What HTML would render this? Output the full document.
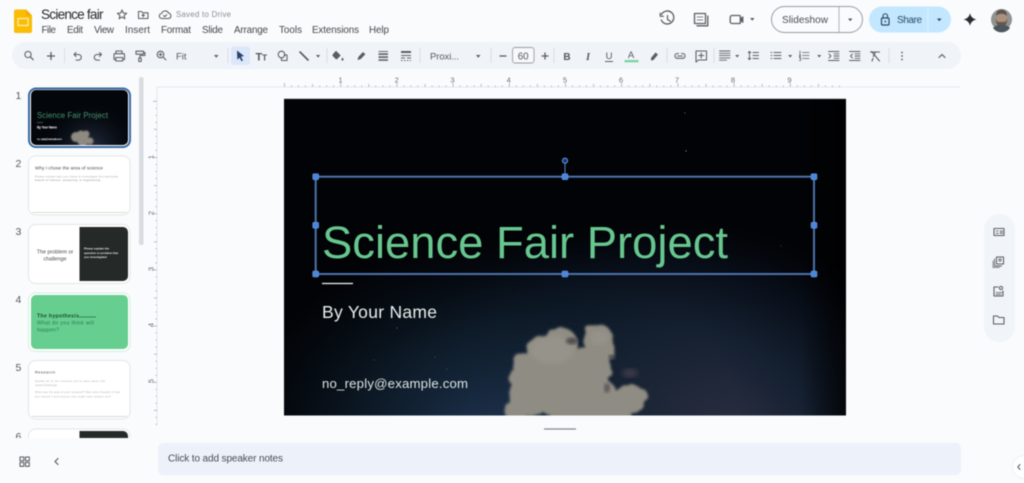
<!DOCTYPE html>
<html lang="en">
<head>
<meta charset="utf-8">
<title>Science fair</title>
<style>
html,body{margin:0;padding:0;width:1024px;height:483px;overflow:hidden;background:#f9fbfd}
svg{display:block;position:absolute;left:0;top:0;filter:blur(.4px)}
text{font-family:"Liberation Sans",sans-serif}
.i{fill:none;stroke:#5b5e60;stroke-width:1.05;stroke-linecap:round;stroke-linejoin:round}
.m{font-size:9.8px;fill:#45484a}
.a{fill:#5b5e60}
.sep{stroke:#dce0e5;stroke-width:1}
.n{font-size:10.5px;fill:#55585a}
.r{font-size:7.5px;fill:#6b6f73;text-anchor:middle}
</style>
</head>
<body>
<svg width="1024" height="483" viewBox="0 0 1024 483" xmlns="http://www.w3.org/2000/svg">
<defs>
<pattern id="th" x="284" y="0" width="56.2" height="10" patternUnits="userSpaceOnUse">
<path d="M.5 83V87M7.5 85.500V87M14.500 85.500V87M21.500 85.500V87M28.600 84V87M35.600 85.500V87M42.600 85.500V87M49.600 85.500V87" transform="translate(0,-80)" stroke="#a0a4a8" stroke-width=".7" fill="none"/>
</pattern>
<pattern id="tv" x="0" y="100.8" width="10" height="56.2" patternUnits="userSpaceOnUse">
<path d="M3 .5H7M5.500 7.500H7M5.500 14.500H7M5.500 21.500H7M4 28.600H7M5.500 35.600H7M5.500 42.600H7M5.500 49.600H7" stroke="#a0a4a8" stroke-width=".7" fill="none"/>
</pattern>
<radialGradient id="g1" gradientUnits="userSpaceOnUse" cx="660" cy="470" r="360" gradientTransform="translate(660 470) scale(.85 .72) translate(-660 -470)">
<stop offset="0" stop-color="#363b4d"/><stop offset=".28" stop-color="#2a2f41"/><stop offset=".55" stop-color="#152031"/><stop offset=".8" stop-color="#080e18"/><stop offset="1" stop-color="#03060b" stop-opacity="0"/>
</radialGradient>
<radialGradient id="g2" gradientUnits="userSpaceOnUse" cx="490" cy="440" r="240" gradientTransform="translate(490 440) scale(1.05 .85) translate(-490 -440)">
<stop offset="0" stop-color="#1e3450" stop-opacity=".95"/><stop offset=".55" stop-color="#10202f" stop-opacity=".7"/><stop offset="1" stop-color="#0a1522" stop-opacity="0"/>
</radialGradient>
<linearGradient id="g4" x1="0" x2="1" y1="0" y2="0">
<stop offset="0" stop-color="#000" stop-opacity="0"/><stop offset="1" stop-color="#000" stop-opacity=".7"/>
</linearGradient>
<radialGradient id="g3" gradientUnits="userSpaceOnUse" cx="90" cy="150" r="48">
<stop offset="0" stop-color="#2a3346"/><stop offset="1" stop-color="#0a0f18" stop-opacity="0"/>
</radialGradient>
<linearGradient id="cl" x1="0" x2="0" y1="0" y2="1">
<stop offset="0" stop-color="#9a968b"/><stop offset="1" stop-color="#88857c"/>
</linearGradient>
<filter id="cloud" x="-10%" y="-10%" width="120%" height="120%">
<feTurbulence type="fractalNoise" baseFrequency=".09" numOctaves="2" seed="4" result="n"/>
<feDisplacementMap in="SourceGraphic" in2="n" scale="6" result="d"/>
<feGaussianBlur in="d" stdDeviation="1.300"/>
</filter>
<filter id="b2"><feGaussianBlur stdDeviation="1.500"/></filter>
<filter id="b3"><feGaussianBlur stdDeviation="2.800"/></filter>
<filter id="b1"><feGaussianBlur stdDeviation=".8"/></filter>
<clipPath id="slide"><rect x="284" y="99" width="562" height="316.500"/></clipPath>
<clipPath id="tc"><rect x="0" y="80" width="136" height="358"/></clipPath>
<clipPath id="th1"><rect x="31" y="90" width="97" height="55" rx="5"/></clipPath>
</defs>

<rect width="1024" height="483" fill="#f9fbfd"/>

<!-- logo -->
<path d="M16 9.500H26L32 15.500V31a2 2 0 0 1-2 2H16a2 2 0 0 1-2-2V11.500a2 2 0 0 1 2-2Z" fill="#fbbc04"/>
<path d="M26 9.500L32 15.500H27.500a1.500 1.500 0 0 1-1.500-1.500Z" fill="#f5a800"/>
<rect x="18" y="18.500" width="10" height="7" fill="none" stroke="#fdeeb8" stroke-width="1.200"/>

<!-- title row -->
<text x="41" y="19" font-size="13.600" fill="#2a2a2a" textLength="62.500">Science fair</text>
<path class="i" d="M122 10l1.300 3 3.300.3-2.500 2.200.8 3.200-2.900-1.700-2.900 1.700.8-3.200-2.500-2.200 3.300-.3Z"/>
<path class="i" d="M138.500 11.500h3l1.200 1.300h5.300v5.700h-9.500Z"/>
<path class="i" d="M143.200 17v-2.500M142 15.500l1.200-1.200 1.200 1.200" stroke-width=".8"/>
<path class="i" d="M162 18.500a2.500 2.500 0 0 1-.4-5 3.800 3.800 0 0 1 7-.4 2.800 2.800 0 0 1 .4 5.400Z"/>
<path class="i" d="M163.500 15.500l1.200 1.200 2-2" stroke-width=".8"/>
<text x="176" y="17" font-size="7.800" fill="#8a8e92" textLength="55">Saved to Drive</text>

<!-- menu -->
<text class="m" x="41.500" y="33" textLength="14.500">File</text>
<text class="m" x="67" y="33" textLength="16">Edit</text>
<text class="m" x="94" y="33" textLength="20">View</text>
<text class="m" x="125" y="33" textLength="25">Insert</text>
<text class="m" x="161" y="33" textLength="30">Format</text>
<text class="m" x="202" y="33" textLength="21">Slide</text>
<text class="m" x="234" y="33" textLength="34">Arrange</text>
<text class="m" x="279" y="33" textLength="23">Tools</text>
<text class="m" x="312" y="33" textLength="47">Extensions</text>
<text class="m" x="369" y="33" textLength="20">Help</text>

<!-- top right -->
<g class="i">
<path d="M661.500 14.500a6.500 6.500 0 1 1-.2 5.500" stroke-width="1.300"/>
<path d="M660.200 13v3.300h3.300" stroke-width="1.100"/>
<path d="M667.500 15.500v4l2.800 1.700" stroke-width="1.200"/>
<path d="M694.500 13.500h11v10h-11Z" stroke-width="1.300"/>
<path d="M697 25.800H707.800V16" stroke-width="1.300"/>
<path d="M697 17h6M697 20h6" stroke-width=".7"/>
<path d="M732 15.500h7.500a.8.800 0 0 1 .8.800v7.200H732a1.800 1.800 0 0 1-1.800-1.800v-4.400A1.800 1.800 0 0 1 732 15.500Z" stroke-width="1.300"/>
<path d="M740.500 18.500l2.500-1.800v5.800l-2.500-1.800Z" fill="#5b5e60" stroke-width=".8"/>
</g>
<path class="a" d="M750 18h4.500l-2.250 2.800Z"/>
<rect x="771.500" y="6.500" width="91" height="26" rx="13" fill="#f9fbfd" stroke="#9a9ea2" stroke-width="1"/>
<path d="M839 7V32" stroke="#b0b4b8" stroke-width="1"/>
<text x="782" y="23" font-size="10" fill="#4a4d50" textLength="46">Slideshow</text>
<path class="a" d="M848 18.500h4.500l-2.250 2.700Z"/>
<rect x="869" y="6.500" width="82" height="26" rx="13" fill="#c2e7ff"/>
<path d="M928 7V32" stroke="#dff1fe" stroke-width="1"/>
<rect x="881.500" y="18" width="7.500" height="7" rx="1" fill="none" stroke="#2b4a66" stroke-width="1.200"/>
<path d="M883 18v-2a2.250 2.250 0 0 1 4.500 0v2" fill="none" stroke="#2b4a66" stroke-width="1.100"/>
<circle cx="885.250" cy="21.500" r=".9" fill="#2b4a66"/>
<text x="897" y="23" font-size="10" fill="#2b4a66" textLength="25">Share</text>
<path d="M937 18.500h4.500l-2.250 2.700Z" fill="#2b4a66"/>
<path d="M970 13C970.800 16.800 972.500 18.500 976.500 19.500 972.500 20.500 970.800 22.200 970 26 969.200 22.200 967.500 20.500 963.500 19.500 967.500 18.500 969.200 16.800 970 13Z" fill="#2a2c30"/>
<circle cx="1001.500" cy="19.500" r="10.500" fill="#8e938f"/>
<ellipse cx="1001.500" cy="18" rx="5.500" ry="6.500" fill="#ac8f7c"/>
<path d="M996 18.500c1 4 2 3.500 5.500 3.500s4.500 .5 5.500-3.500c.5 6-2 8-5.500 8s-6-2-5.500-8Z" fill="#66574d"/>
<path d="M996 16c0-5 3-6.500 5.500-6.500s5.500 1.500 5.500 6.500c-2-3-9-3-11 0Z" fill="#5a5550"/>
<path d="M993 28c2-2.500 5-3 8.500-3s6.500 .5 8.500 3a10.500 10.500 0 0 1-17 0Z" fill="#4c565d"/>

<!-- toolbar -->
<rect x="12" y="42" width="949" height="27" rx="13.500" fill="#f0f4f9"/>
<rect x="231" y="46.500" width="19" height="18.500" rx="3" fill="#dce8fa"/>
<path class="sep" d="M64.500 48V63M228 48V63M327 48V63M420 48V63M491 48V63M554 48V63M667 48V63M714 48V63M889 48V63"/>

<g class="i">
<circle cx="28" cy="54.500" r="3.100"/><path d="M30.300 56.800l2.900 2.900" stroke-width="1.200"/>
<path d="M51 52.500v7M47.500 56h7" stroke-width="1.300"/>
<path d="M74 54.500l2-2M74 54.500l2 2M74 54.500H78.500a2.800 2.800 0 0 1 0 5.600H76"/>
<path d="M101.500 54.500l-2-2M101.500 54.500l-2 2M101.500 54.500H97a2.800 2.800 0 0 0 0 5.600h2.500"/>
<path d="M116 53.500v-2.500h6v2.500M115.800 59.500H114v-5a.8.800 0 0 1 .8-.8h8.900a.8.800 0 0 1 .8.800v5h-1.800M115.800 57.500h6.900v3.500h-6.900Z"/>
<path d="M136 51.200h7.500v3H136ZM143.500 52.500h1.500v3h-5v2.500M138.800 58h2.400v3.500h-2.400Z"/>
<circle cx="160.500" cy="54.500" r="3.300"/><path d="M163 57l2.900 2.900M159 54.500h3M160.500 53v3"/>
</g>
<text x="176" y="59.500" font-size="9.500" fill="#55585a" textLength="10.500">Fit</text>
<path class="a" d="M214 55h4.500l-2.250 2.800Z"/>
<path d="M237 50.500L244 56 241 56.700 243 60.500 241.500 61.300 239.500 57.600 237.300 59.700Z" fill="#2b4269"/>
<text x="255.500" y="60.500" font-size="11" font-weight="bold" fill="#55585a">T</text>
<text x="262" y="60.500" font-size="8.500" font-weight="bold" fill="#55585a">T</text>
<g class="i">
<circle cx="281.500" cy="54.500" r="3.300"/><path d="M284 55h3v5.500h-5.500v-2.700"/>
<path d="M300 52l8 8" stroke-width="1.700"/>
<path d="M336 51.500l4 4-3 3a.8.800 0 0 1-1.100 0l-2.700-2.700a.8.800 0 0 1 0-1.100Z" fill="#5b5e60"/>
<path d="M358 59.500l.8-2.500 4.200-4.500 1.800 1.700-4.300 4.500Z" fill="#5b5e60" stroke-width=".8"/>
</g>
<path class="a" d="M342.500 57.500c-.7 1-1.100 1.500-1.100 2a1.100 1.100 0 0 0 2.200 0c0-.5-.4-1-1.100-2Z"/>
<path class="a" d="M316 55h4.200l-2.100 2.600Z"/>
<rect x="378.500" y="51" width="9.500" height=".9" fill="#5b5e60"/><rect x="378.500" y="53.300" width="9.500" height="1.600" fill="#5b5e60"/><rect x="378.500" y="56.300" width="9.500" height="1.600" fill="#5b5e60"/><rect x="378.500" y="59.300" width="9.500" height="1.500" fill="#5b5e60"/>
<rect x="401" y="51" width="10" height="2" fill="#5b5e60"/><path d="M401 55.500h10M401 58h4M407 58h4M401 60.500h1.500M404 60.500h1.500M407 60.500h1.500M410 60.500h1" stroke="#5b5e60" stroke-width=".9"/>
<text x="430" y="59.500" font-size="9.500" fill="#55585a" textLength="29">Proxi...</text>
<path class="a" d="M476 55h4.500l-2.250 2.800Z"/>
<path d="M499.500 56h7" stroke="#5b5e60" stroke-width="1.300"/>
<rect x="512.500" y="47.500" width="21.500" height="15.500" rx="2.500" fill="#f6f8fb" stroke="#9a9ea2" stroke-width=".9"/>
<text x="523.200" y="59.300" font-size="9.800" fill="#55585a" text-anchor="middle">60</text>
<path d="M545 52.500v7M541.500 56h7" stroke="#5b5e60" stroke-width="1.300"/>
<text x="567" y="59.800" font-size="10" font-weight="bold" fill="#55585a" text-anchor="middle">B</text>
<text x="588" y="59.800" font-size="10.500" font-style="italic" font-weight="bold" fill="#55585a" text-anchor="middle" style="font-family:'Liberation Serif',serif">I</text>
<text x="609" y="59" font-size="9.500" fill="#55585a" text-anchor="middle">U</text>
<path d="M605 61.500h8" stroke="#5b5e60" stroke-width="1"/>
<text x="631" y="58" font-size="9.500" fill="#55585a" text-anchor="middle">A</text>
<rect x="624.500" y="60" width="14" height="2.300" fill="#79d4a0"/>
<path d="M651 58l4.500-5.500 2.500 2-4.500 5.500-2.500 .5Z" fill="#5b5e60"/>
<g class="i">
<path d="M678.500 53.500h-1.200a2.400 2.400 0 0 0 0 4.800h2.200M681.500 53.500h1.200a2.400 2.400 0 0 1 0 4.800h-2.200M677.500 56h5"/>
<path d="M696 51h10.500v9h-8l-2.500 2ZM701.200 53v5M698.700 55.500h5"/>
<path d="M719.500 51h10.500M719.500 53.300h10.500M719.500 55.600h10.500M719.500 57.900h10.500M719.500 60.200h7" stroke-width=".9"/>
<path d="M749.500 51.500v8M748.200 52.800l1.300-1.500 1.300 1.500M748.200 58.200l1.300 1.500 1.300-1.500M753 52.500h5.500M753 55.500h5.500M753 58.500h5.500" stroke-width=".9"/>
<path d="M774 52.500h7M774 55.500h7M774 58.500h7M771 52.500h.8M771 55.500h.8M771 58.500h.8" stroke-width="1"/>
<path d="M802.500 52.500h6.500M802.500 55.500h6.500M802.500 58.500h6.500M800 51v3M799.300 55h1.300l-1.300 1.800h1.300M799.300 58h1.300v2.500h-1.300" stroke-width=".8"/>
<path d="M828.500 51.500h10.500M834 53.800h5M834 56h5M834 58.300h5M828.500 60.500h10.500M829 54l2 2-2 2" stroke-width=".9"/>
<path d="M849.500 51.500h10.500M855 53.800h5M855 56h5M855 58.300h5M849.500 60.500h10.500M852.500 54l-2 2 2 2" stroke-width=".9"/>
<path d="M870.500 52h9M875.500 52l-2.200 4.500M871.500 51.500l8 9.500M873 58.500l-1 2.500" stroke-width="1.100"/>
<path d="M939 57.500l3-3 3 3" stroke-width="1.200"/>
</g>
<path class="a" d="M735.200 55h4l-2 2.500ZM788.200 55h4l-2 2.500ZM817.200 55h4l-2 2.500Z"/>
<circle cx="902" cy="52.500" r=".9" class="a"/><circle cx="902" cy="56" r=".9" class="a"/><circle cx="902" cy="59.500" r=".9" class="a"/>

<!-- rulers -->
<path d="M157 87H960" stroke="#e6e8ec" stroke-width="1"/>
<path d="M157 87V425" stroke="#e6e8ec" stroke-width="1"/>
<rect x="284" y="83" width="562" height="4" fill="url(#th)"/>
<rect x="150" y="100" width="7" height="325" fill="url(#tv)"/>
<text class="r" x="340.500" y="82.500">1</text><text class="r" x="396.700" y="82.500">2</text><text class="r" x="452.500" y="82.500">3</text><text class="r" x="508.700" y="82.500">4</text><text class="r" x="565" y="82.500">5</text><text class="r" x="621" y="82.500">6</text><text class="r" x="677" y="82.500">7</text><text class="r" x="733" y="82.500">8</text><text class="r" x="789.500" y="82.500">9</text>
<text class="r" transform="translate(153.500 157) rotate(-90)">1</text><text class="r" transform="translate(153.500 213) rotate(-90)">2</text><text class="r" transform="translate(153.500 269) rotate(-90)">3</text><text class="r" transform="translate(153.500 325) rotate(-90)">4</text><text class="r" transform="translate(153.500 381) rotate(-90)">5</text>

<!-- filmstrip scrollbar -->
<rect x="139" y="77" width="4.500" height="168" rx="2" fill="#d9dce1"/>

<!-- thumbnails -->
<g clip-path="url(#tc)">
<text class="n" x="15.500" y="99">1</text>
<text class="n" x="15.500" y="167">2</text>
<text class="n" x="15.500" y="235">3</text>
<text class="n" x="15.500" y="303">4</text>
<text class="n" x="15.500" y="371">5</text>
<text class="n" x="15.500" y="440">6</text>

<rect x="29" y="88.500" width="101" height="58.500" rx="7" fill="#fff" stroke="#3a68a3" stroke-width="2"/>
<rect x="31" y="90" width="97" height="55" rx="5" fill="#03060b"/>
<g clip-path="url(#th1)">
<rect x="31" y="90" width="97" height="55" fill="url(#g3)"/>
<g fill="#8e8a7f" filter="url(#b1)"><circle cx="76" cy="137" r="5"/><circle cx="81" cy="134.500" r="4"/><circle cx="86" cy="134" r="3.500"/><circle cx="83" cy="140" r="6"/><circle cx="90" cy="141" r="3.500"/></g>
</g>
<text x="37" y="118" font-size="7.800" fill="#46946a" textLength="71">Science Fair Project</text>
<path d="M37 122.500h6" stroke="#8a9a95" stroke-width=".5"/>
<text x="37" y="128.500" font-size="3.200" font-weight="bold" fill="#eee" textLength="20">By Your Name</text>
<text x="37" y="139.800" font-size="2.800" font-weight="bold" fill="#ddd" textLength="25">no_reply@example.com</text>

<rect x="28.500" y="156" width="101.500" height="59" rx="7" fill="#fff" stroke="#e3e7e6" stroke-width="1"/>
<path d="M32 212.500H127" stroke="#c8e6d3" stroke-width=".9"/>
<text x="35" y="169.500" font-size="4.700" fill="#4a4a4a" textLength="68">Why I chose the area of science</text>
<text x="35" y="177.300" font-size="2.700" fill="#a5a8aa" textLength="83">Please explain why you chose to investigate this particular</text>
<text x="35" y="181" font-size="2.700" fill="#85888a" textLength="66">branch of science, computing, or engineering.</text>

<rect x="28.500" y="224.500" width="101.500" height="59" rx="7" fill="#fff" stroke="#e3e7e6" stroke-width="1"/>
<path d="M79.500 227H123a5 5 0 0 1 5 5V276a5 5 0 0 1-5 5H79.500Z" fill="#252a29"/>
<text x="55" y="253.300" font-size="5.400" fill="#4a4a4a" text-anchor="middle">The problem or</text>
<text x="55" y="260.500" font-size="5.400" fill="#4a4a4a" text-anchor="middle">challenge</text>
<text x="84" y="249.500" font-size="2.900" font-weight="bold" fill="#e8e8e8">Please explain the</text>
<text x="84" y="253.800" font-size="2.900" font-weight="bold" fill="#e8e8e8">question or problem that</text>
<text x="84" y="258" font-size="2.900" font-weight="bold" fill="#e8e8e8">you investigated</text>

<rect x="28.500" y="293" width="101.500" height="58.500" rx="7" fill="#fff" stroke="#d5ecdc" stroke-width="1"/>
<rect x="31" y="295" width="97" height="54" rx="5" fill="#66cf8f"/>
<text x="37" y="317.500" font-size="5.200" font-weight="bold" fill="#1d4a32" textLength="42">The hypothesis</text>
<path d="M79 317H96" stroke="#2a6a48" stroke-width=".7"/>
<text x="37" y="324.500" font-size="5.200" fill="#2a7a50" textLength="57">What do you think will</text>
<text x="37" y="331.500" font-size="5.200" fill="#2a7a50" textLength="22">happen?</text>

<rect x="28.500" y="360.500" width="101.500" height="58.500" rx="7" fill="#fff" stroke="#e3e7e6" stroke-width="1"/>
<path d="M32 416.500H127" stroke="#d3dcd7" stroke-width=".9"/>
<text x="35" y="373.300" font-size="3.900" fill="#444" textLength="20">Research</text>
<text x="35" y="382" font-size="2.400" fill="#a5a8aa" textLength="70">Explain all of the research you've done about this</text>
<text x="35" y="386" font-size="2.400" fill="#a5a8aa" textLength="22">impact/challenge</text>
<text x="35" y="393" font-size="2.400" fill="#a5a8aa" textLength="85">What was the goal of your research? Was some thought of how</text>
<text x="35" y="397.500" font-size="2.400" fill="#a5a8aa" textLength="76">you moved it and anyone else might have helped you?</text>

<rect x="28.500" y="429" width="101.500" height="20" rx="7" fill="#fff" stroke="#e3e7e6" stroke-width="1"/>
<path d="M79.500 431H123a5 5 0 0 1 5 5V445H79.500Z" fill="#252a29"/>
</g>

<!-- bottom left controls -->
<g class="i">
<rect x="20" y="457" width="3.800" height="3.800"/><rect x="25.500" y="457" width="3.800" height="3.800"/><rect x="20" y="462.500" width="3.800" height="3.800"/><rect x="25.500" y="462.500" width="3.800" height="3.800"/>
<path d="M58 458.500l-3 3 3 3" stroke-width="1.200"/>
</g>

<!-- slide -->
<g clip-path="url(#slide)">
<rect x="284" y="99" width="562" height="317" fill="#020306"/>
<rect x="284" y="99" width="562" height="317" fill="url(#g1)"/>
<rect x="284" y="99" width="562" height="317" fill="url(#g2)"/>
<rect x="800" y="99" width="46" height="317" fill="url(#g4)"/>
<g fill="#8f8c83" filter="url(#cloud)">
<circle cx="560" cy="345" r="18"/><circle cx="541" cy="351" r="15"/><circle cx="526" cy="365" r="13"/><circle cx="518" cy="378" r="9"/><circle cx="530" cy="395" r="21"/><circle cx="560" cy="385" r="32"/>
<circle cx="598" cy="339" r="15"/><circle cx="605" cy="350" r="10"/><circle cx="588" cy="370" r="23"/><circle cx="598" cy="398" r="20"/>
<circle cx="630" cy="399" r="15"/><circle cx="641" cy="396" r="7"/><circle cx="516" cy="412" r="11"/><circle cx="575" cy="412" r="25"/><circle cx="618" cy="412" r="14"/>
</g>
<ellipse cx="552" cy="350" rx="22" ry="14" fill="#9c9890" filter="url(#b3)" opacity=".6"/>
<ellipse cx="599" cy="338" rx="9" ry="7" fill="#9c9890" filter="url(#b3)" opacity=".6"/>
<ellipse cx="572" cy="341" rx="6" ry="3.500" fill="#4f4d50" filter="url(#b2)"/>
<ellipse cx="607" cy="388" rx="3" ry="5" fill="#5c5a5c" filter="url(#b2)"/>
<ellipse cx="612" cy="357" rx="3.500" ry="2.500" fill="#4a4a50" filter="url(#b2)"/>
<ellipse cx="630" cy="373" rx="8" ry="4.500" fill="#3d3b48" filter="url(#b3)"/>
<g fill="#8d98a3">
<circle cx="685" cy="113" r=".5"/><circle cx="686" cy="151" r=".6"/><circle cx="397" cy="328" r=".5"/><circle cx="374" cy="360" r=".4"/><circle cx="435" cy="357" r=".4"/><circle cx="447" cy="369" r=".4"/><circle cx="781" cy="246" r=".4"/>
</g>
</g>
<path d="M284 99H846" stroke="#3a3d42" stroke-width=".5"/>

<text x="322" y="258" font-size="45.400" fill="#67c78f" textLength="406">Science Fair Project</text>
<path d="M322 283.500H353" stroke="#f4f4f4" stroke-width="1.300"/>
<text x="322" y="318" font-size="17.500" fill="#e8efee" textLength="115">By Your Name</text>
<text x="322" y="388" font-size="13.200" fill="#dfe5e4" textLength="146">no_reply@example.com</text>

<!-- selection -->
<rect x="315.700" y="176.700" width="498.300" height="97.300" fill="none" stroke="#4c72ad" stroke-width="2"/>
<path d="M565 163V176" stroke="#5d86c4" stroke-width="1"/>
<circle cx="565" cy="160.700" r="2.500" fill="#1d3153" stroke="#4c86da" stroke-width="1.300"/>
<g fill="#4a86dc" stroke="#6f9ee2" stroke-width=".5">
<rect x="312.700" y="173.700" width="6" height="6" rx="1"/><rect x="562" y="173.700" width="6" height="6" rx="1"/><rect x="811" y="173.700" width="6" height="6" rx="1"/>
<rect x="312.700" y="222.300" width="6" height="6" rx="1"/><rect x="811" y="222.300" width="6" height="6" rx="1"/>
<rect x="312.700" y="271" width="6" height="6" rx="1"/><rect x="562" y="271" width="6" height="6" rx="1"/><rect x="811" y="271" width="6" height="6" rx="1"/>
</g>

<!-- notes -->
<path d="M544 429H576" stroke="#85888c" stroke-width="1.200"/>
<rect x="158" y="443" width="803" height="32" rx="5" fill="#edf2fa"/>
<text x="168" y="461.500" font-size="10" fill="#4a4d50" textLength="115">Click to add speaker notes</text>

<!-- side panel -->
<rect x="984" y="214" width="31" height="128" rx="15.500" fill="#f1f4f9"/>
<g class="i">
<rect x="994" y="228.500" width="10" height="7"/><path d="M996 231h2.500M996 233.300h2.500M1000.500 231v2.500h1.800V231Z" stroke-width=".8"/>
<rect x="996.500" y="257" width="7" height="7"/><path d="M994.500 259v7h7" stroke-width=".9"/><path d="M993 261v6.500h6.500" stroke-width=".7"/><circle cx="1000" cy="260" r="1.200" stroke-width=".8"/>
<path d="M994 287h4M994 287v9h9v-5"/><circle cx="1001" cy="288" r="1.600"/><path d="M996 292.500h7M996 294.300h5" stroke-width=".8"/>
<path d="M993.500 316h4l1.500 1.500h5v6.500h-10.500Z"/>
</g>
<circle cx="1024" cy="467" r="11.500" fill="#fff" stroke="#eef0f3"/>
<path class="i" d="M1020 464.500l-2.200 2.500 2.200 2.500" stroke-width="1.200"/>
</svg>
</body>
</html>
